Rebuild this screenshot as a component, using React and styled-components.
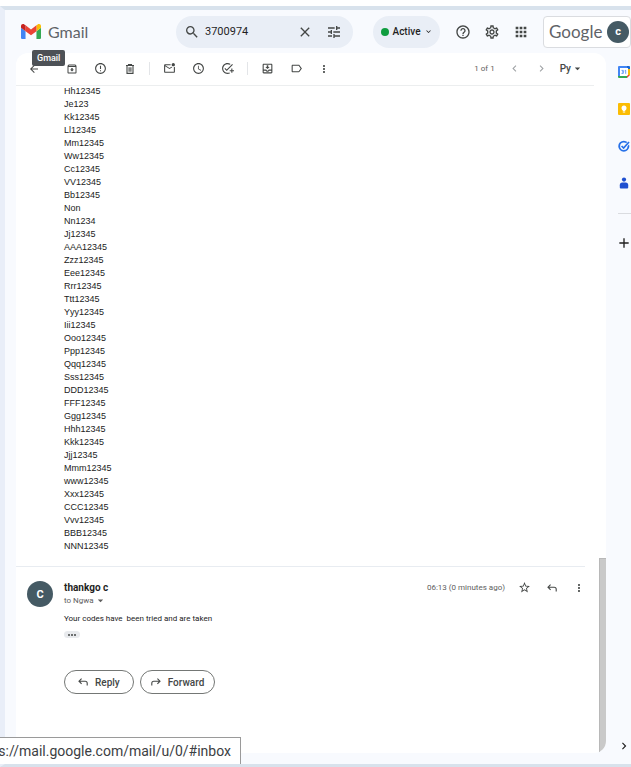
import React from 'react'
import styled, { createGlobalStyle } from 'styled-components'
import {
  MdAccessTime,
  MdAdd,
  MdApps,
  MdArrowBack,
  MdArrowDropDown,
  MdChevronLeft,
  MdChevronRight,
  MdClose,
  MdErrorOutline,
  MdHelpOutline,
  MdLabelOutline,
  MdMoreVert,
  MdOutlineAddTask,
  MdOutlineArchive,
  MdOutlineMarkEmailUnread,
  MdOutlineMoveToInbox,
  MdOutlineSettings,
  MdSearch,
  MdStarBorder,
  MdTune,
  MdKeyboardArrowDown
} from 'react-icons/md'

const GlobalStyle = createGlobalStyle`
  * {
    box-sizing: border-box;
  }
  body {
    margin: 0;
    background: #ffffff;
    color: #202124;
    font-family: Roboto, 'Liberation Sans', sans-serif;
  }
  button, input {
    font-family: inherit;
    color: inherit;
  }
  svg {
    display: block;
    flex: none;
  }
`

const Page = styled.div`
  min-height: 100vh;
  padding-top: 6px;
  display: flex;
`

const Frame = styled.div`
  flex: 1;
  min-width: 0;
  display: flex;
  flex-direction: column;
  background: #f8fafe;
  border-style: solid;
  border-width: 4px 0 3px 5px;
  border-color: #d8e2ec #d8e2ec #d8e2ec #e9eef8;
`

const Header = styled.header`
  display: flex;
  align-items: center;
  height: 43px;
  padding-left: 16px;
`

const Brand = styled.a`
  position: relative;
  display: flex;
  align-items: center;
  gap: 7px;
  width: 155px;
  color: #5f6368;
  font-family: Lato, sans-serif;
  font-size: 16px;
  line-height: 20px;
  text-decoration: none;
`

const Tooltip = styled.span`
  position: absolute;
  left: 11px;
  top: 28px;
  z-index: 2;
  padding: 0 5px;
  border-radius: 2px;
  background: #4d5156;
  color: #ffffff;
  font-family: Roboto, sans-serif;
  font-size: 9px;
  font-weight: 500;
  line-height: 16px;
`

const Search = styled.form`
  flex: 1;
  min-width: 0;
  display: flex;
  align-items: center;
  height: 32px;
  padding: 0 5px 0 8px;
  border-radius: 16px;
  background: #e9eef6;
  color: #444746;
`

const SearchInput = styled.input`
  flex: 1;
  min-width: 0;
  padding: 0 5px;
  border: none;
  outline: none;
  background: transparent;
  color: #1f1f1f;
  font-size: 11px;
`

const IconButton = styled.button`
  display: flex;
  align-items: center;
  justify-content: center;
  flex: none;
  width: ${(props) => props.$width || 29}px;
  height: 24px;
  padding: 0;
  border: none;
  background: transparent;
  color: ${(props) => props.$color || '#444746'};
  cursor: pointer;
`

const Status = styled.button`
  display: flex;
  align-items: center;
  justify-content: space-between;
  width: 67px;
  height: 32px;
  margin: 0 8px 0 20px;
  padding: 0 7px 0 8px;
  border: none;
  border-radius: 16px;
  background: #e9eef6;
  color: #1f1f1f;
  font-size: 10px;
  font-weight: 500;
`

const Dot = styled.span`
  width: 8px;
  height: 8px;
  border-radius: 50%;
  background: #0f9d3f;
`

const Account = styled.button`
  display: flex;
  align-items: center;
  gap: 5px;
  height: 32px;
  margin-left: 8px;
  padding: 0 1px 0 5px;
  border: 1px solid #dadce0;
  border-radius: 4px;
  background: #ffffff;
  color: #5f6368;
`

const Google = styled.span`
  width: 53px;
  color: #5f6368;
  font-family: Lato, sans-serif;
  font-size: 17px;
  line-height: 24px;
`

const Avatar = styled.span`
  display: flex;
  align-items: center;
  justify-content: center;
  flex: none;
  width: ${(props) => props.$size}px;
  height: ${(props) => props.$size}px;
  border-radius: 50%;
  background: #455a64;
  color: #ffffff;
  font-size: ${(props) => props.$font}px;
  font-weight: 700;
`

const Main = styled.div`
  flex: 1;
  display: flex;
  padding: 0 0 11px 11px;
`

const Panel = styled.main`
  flex: 1;
  min-width: 0;
  display: flex;
  flex-direction: column;
  overflow: hidden;
  border-radius: 12px;
  background: #ffffff;
`

const Toolbar = styled.div`
  display: flex;
  align-items: center;
  height: 33px;
  margin: 0 12px -1px 0;
  padding: 0 10px 1px 3px;
  border-bottom: 1px solid #eceeef;
`

const Separator = styled.span`
  width: 1px;
  height: 13px;
  margin: 0 5px;
  background: #e3e5e8;
`

const Pager = styled.div`
  display: flex;
  align-items: center;
  margin-left: auto;
  color: #5e5e5e;
  font-size: 8px;
`

const BackButton = styled(IconButton)`
  margin-right: 9px;
`

const InputTools = styled.button`
  display: flex;
  align-items: center;
  margin-left: 11px;
  padding: 0;
  border: none;
  background: transparent;
  color: #444746;
  font-size: 10px;
  font-weight: 500;
`

const Scroller = styled.div`
  flex: 1;
  display: flex;
`

const Thread = styled.div`
  flex: 1;
  min-width: 0;
`

const Track = styled.div`
  display: flex;
  align-items: flex-end;
  width: 7px;
`

const Thumb = styled.div`
  width: 100%;
  height: 195px;
  border: solid #b8b8b8;
  border-width: 1px 0 0 1px;
  background: #c9c9c9;
`

const Codes = styled.div`
  padding: 0 0 13px 48px;
  margin-right: 14px;
  border-bottom: 1px solid #e8ecf1;
  color: #222222;
  font-family: 'Liberation Sans', Arial, sans-serif;
  font-size: 9px;
  line-height: 13px;
`

const Message = styled.article`
  display: flex;
  gap: 11px;
  padding: 14px 7px 20px 11px;
`

const MessageMain = styled.div`
  flex: 1;
  min-width: 0;
`

const MessageHead = styled.div`
  display: flex;
  align-items: center;
  height: 13px;
`

const Sender = styled.h3`
  flex: 1;
  margin: 0;
  color: #1f1f1f;
  font-size: 10px;
  font-weight: 700;
  line-height: 13px;
`

const Time = styled.time`
  margin-right: 6px;
  color: #5e5e5e;
  font-size: 8px;
`

const Recipient = styled.button`
  display: flex;
  align-items: center;
  padding: 0;
  border: none;
  background: transparent;
  color: #5e5e5e;
  font-size: 8px;
  line-height: 13px;
`

const Text = styled.p`
  margin: 5px 0;
  color: #222222;
  font-size: 8px;
  line-height: 13px;
  white-space: pre-wrap;
`

const Trimmed = styled.button`
  display: flex;
  align-items: center;
  justify-content: center;
  gap: 1px;
  width: 16px;
  height: 7px;
  margin-top: 6px;
  padding: 0;
  border: none;
  border-radius: 4px;
  background: #e8eaed;

  i {
    width: 2px;
    height: 2px;
    border-radius: 50%;
    background: #444746;
  }
`

const Actions = styled.div`
  display: flex;
  gap: 6px;
  margin-top: 32px;
`

const PillButton = styled.button`
  display: flex;
  align-items: center;
  gap: 7px;
  height: 24px;
  padding: 0 ${(props) => props.$pad}px;
  border: 1px solid #747775;
  border-radius: 12px;
  background: #ffffff;
  color: #444746;
  font-size: 10px;
  font-weight: 500;
`

const Rail = styled.aside`
  display: flex;
  flex-direction: column;
  align-items: flex-end;
  width: 25px;
  padding-top: 6px;
`

const RailButton = styled.button`
  display: flex;
  align-items: center;
  justify-content: center;
  width: 14px;
  height: 25px;
  margin-bottom: 12px;
  padding: 0;
  border: none;
  background: transparent;
  color: #1f1f1f;
`

const RailLine = styled.span`
  width: 13px;
  height: 1px;
  margin: 6px 0 16px;
  background: #dadce0;
`

const RailToggle = styled(RailButton)`
  margin: auto 0 -5px;
`

const LinkPreview = styled.div`
  position: fixed;
  left: 0;
  bottom: 3px;
  z-index: 3;
  display: flex;
  justify-content: flex-end;
  width: 241px;
  height: 27px;
  padding-right: 9px;
  overflow: hidden;
  border: solid #9a9a9a;
  border-width: 1px 1px 0 0;
  background: #ffffff;
  color: #3c4043;
  font-size: 14px;
  line-height: 26px;
  white-space: nowrap;
`

const codes = [
  'Hh12345', 'Je123', 'Kk12345', 'Ll12345', 'Mm12345', 'Ww12345',
  'Cc12345', 'VV12345', 'Bb12345', 'Non', 'Nn1234', 'Jj12345',
  'AAA12345', 'Zzz12345', 'Eee12345', 'Rrr12345', 'Ttt12345', 'Yyy12345',
  'Iii12345', 'Ooo12345', 'Ppp12345', 'Qqq12345', 'Sss12345', 'DDD12345',
  'FFF12345', 'Ggg12345', 'Hhh12345', 'Kkk12345', 'Jjj12345', 'Mmm12345',
  'www12345', 'Xxx12345', 'CCC12345', 'Vvv12345', 'BBB12345', 'NNN12345'
]

const GmailLogo = () => (
  <svg width="20" height="15" viewBox="52 42 88 66">
    <path fill="#4285f4" d="M58 108h14V74L52 59v43c0 3.32 2.69 6 6 6" />
    <path fill="#34a853" d="M120 108h14c3.32 0 6-2.69 6-6V59l-20 15" />
    <path fill="#fbbc04" d="M120 48v26l20-15v-8c0-7.42-8.47-11.65-14.4-7.2" />
    <path fill="#ea4335" d="M72 74V48l24 18 24-18v26L96 92" />
    <path fill="#c5221f" d="M52 51v8l20 15V48l-5.6-4.2c-5.94-4.45-14.4-.22-14.4 7.2" />
  </svg>
)

const ReplyIcon = ({ flip }) => (
  <svg width="10" height="8" viewBox="0 0 10 8" fill="none" stroke="currentColor" strokeWidth="1.1">
    <g transform={flip ? 'translate(10 0) scale(-1 1)' : undefined}>
      <path d="M3.6.6 1 3.2l2.6 2.6M1 3.2h6.2c1.2 0 2 .8 2 2v2.2" />
    </g>
  </svg>
)

const TrashIcon = () => (
  <svg width="10" height="10" viewBox="0 0 10 10" fill="none" stroke="currentColor" strokeWidth="1.1">
    <path d="M1 1.500h8M3.500 1V.6h3V1M2 1.500v7.900h6V1.500M4.100 3.200v4.600M5.900 3.200v4.600" />
  </svg>
)

const CalendarIcon = () => (
  <svg width="12" height="12" viewBox="0 0 12 12">
    <path fill="#4285f4" d="M1 0h8v2H2v8H0V1a1 1 0 0 1 1-1" />
    <path fill="#1967d2" d="M9 0h2a1 1 0 0 1 1 1v2H9z" />
    <path fill="#fbbc04" d="M10 3h2v6h-2z" />
    <path fill="#34a853" d="M0 10h9v2H1a1 1 0 0 1-1-1z" />
    <path fill="#ea4335" d="M9 9h3l-3 3z" />
    <path fill="#fff" d="M2 2h8v7l-1 1H2z" />
    <path fill="none" stroke="#4285f4" strokeWidth=".8" d="M3.5 4.4h1.8v3H3.5M4 5.9h1.3M6.7 4.8l1-.5v3.5" />
  </svg>
)

const KeepIcon = () => (
  <svg width="12" height="12" viewBox="0 0 12 12">
    <rect width="12" height="12" rx="1" fill="#fbbc04" />
    <circle cx="6" cy="5" r="2.5" fill="#fff" />
    <path fill="#fff" d="M4.8 7h2.4v1H4.8zM4.8 8.6h2.4v1H4.8z" />
  </svg>
)

const TasksIcon = () => (
  <svg width="12" height="12" viewBox="0 0 12 12" fill="none">
    <circle cx="5.8" cy="6.2" r="4.6" stroke="#2670e8" strokeWidth="1.9" />
    <path d="m3.6 6 2 2 5.2-5.6" stroke="#f8fafe" strokeWidth="3" />
    <path d="m3.6 6 2 2 5.4-6" stroke="#2670e8" strokeWidth="1.7" />
  </svg>
)

const ContactsIcon = () => (
  <svg width="12" height="12" viewBox="0 0 12 12" fill="#1f4fd0">
    <circle cx="6" cy="2.6" r="2.1" />
    <path d="M4.4 5.6h3.2a2.600 2.600 0 0 1 2.600 2.600V10.500a1 1 0 0 1-1 1H2.800a1 1 0 0 1-1-1V8.200a2.600 2.600 0 0 1 2.600-2.600" />
  </svg>
)

export default () => (
  <Page>
    <GlobalStyle />
    <Frame>
      <Header>
        <Brand href="#inbox">
          <GmailLogo />
          Gmail
          <Tooltip>Gmail</Tooltip>
        </Brand>
        <Search>
          <MdSearch size={16} />
          <SearchInput aria-label="Search mail" defaultValue="3700974" />
          <IconButton type="button" aria-label="Clear search"><MdClose size={16} /></IconButton>
          <IconButton type="button" aria-label="Search options"><MdTune size={16} /></IconButton>
        </Search>
        <Status>
          <Dot />
          Active
          <MdKeyboardArrowDown size={9} />
        </Status>
        <IconButton aria-label="Support"><MdHelpOutline size={16} /></IconButton>
        <IconButton aria-label="Settings"><MdOutlineSettings size={16} /></IconButton>
        <IconButton aria-label="Google apps"><MdApps size={16} /></IconButton>
        <Account>
          <Google>Google</Google>
          <Avatar $size={22} $font={11}>c</Avatar>
        </Account>
      </Header>

      <Main>
        <Panel>
          <Toolbar>
            <BackButton aria-label="Back"><MdArrowBack size={12} /></BackButton>
            <IconButton aria-label="Archive"><MdOutlineArchive size={12} /></IconButton>
            <IconButton aria-label="Report spam"><MdErrorOutline size={13} /></IconButton>
            <IconButton aria-label="Delete"><TrashIcon /></IconButton>
            <Separator />
            <IconButton aria-label="Mark as unread"><MdOutlineMarkEmailUnread size={13} /></IconButton>
            <IconButton aria-label="Snooze"><MdAccessTime size={13} /></IconButton>
            <IconButton aria-label="Add to tasks"><MdOutlineAddTask size={13} /></IconButton>
            <Separator />
            <IconButton aria-label="Move to"><MdOutlineMoveToInbox size={13} /></IconButton>
            <IconButton aria-label="Labels"><MdLabelOutline size={13} /></IconButton>
            <IconButton aria-label="More" $width={26}><MdMoreVert size={12} /></IconButton>
            <Pager>
              1 of 1
              <IconButton aria-label="Newer" $width={40} $color="#a0a3a6"><MdChevronLeft size={13} /></IconButton>
              <IconButton aria-label="Older" $width={14} $color="#a0a3a6"><MdChevronRight size={13} /></IconButton>
            </Pager>
            <InputTools aria-label="Input tools">
              Py
              <MdArrowDropDown size={13} />
            </InputTools>
          </Toolbar>

          <Scroller>
            <Thread>
              <Codes>
                {codes.map((code) => (
                  <div key={code}>{code}</div>
                ))}
              </Codes>
              <Message>
                <Avatar $size={26} $font={11}>C</Avatar>
                <MessageMain>
                  <MessageHead>
                    <Sender>thankgo c</Sender>
                    <Time>06:13 (0 minutes ago)</Time>
                    <IconButton aria-label="Star" $width={27}><MdStarBorder size={13} /></IconButton>
                    <IconButton aria-label="Reply" $width={27}><ReplyIcon /></IconButton>
                    <IconButton aria-label="More" $width={27}><MdMoreVert size={12} /></IconButton>
                  </MessageHead>
                  <Recipient>
                    to Ngwa
                    <MdArrowDropDown size={13} />
                  </Recipient>
                  <Text>{'Your codes have  been tried and are taken'}</Text>
                  <Trimmed aria-label="Show trimmed content"><i /><i /><i /></Trimmed>
                  <Actions>
                    <PillButton $pad={13}><ReplyIcon />Reply</PillButton>
                    <PillButton $pad={10}><ReplyIcon flip />Forward</PillButton>
                  </Actions>
                </MessageMain>
              </Message>
            </Thread>
            <Track><Thumb /></Track>
          </Scroller>
        </Panel>

        <Rail>
          <RailButton aria-label="Calendar"><CalendarIcon /></RailButton>
          <RailButton aria-label="Keep"><KeepIcon /></RailButton>
          <RailButton aria-label="Tasks"><TasksIcon /></RailButton>
          <RailButton aria-label="Contacts"><ContactsIcon /></RailButton>
          <RailLine />
          <RailButton aria-label="Get add-ons"><MdAdd size={16} /></RailButton>
          <RailToggle aria-label="Hide side panel"><MdChevronRight size={14} /></RailToggle>
        </Rail>
      </Main>
    </Frame>
    <LinkPreview>s://mail.google.com/mail/u/0/#inbox</LinkPreview>
  </Page>
)
